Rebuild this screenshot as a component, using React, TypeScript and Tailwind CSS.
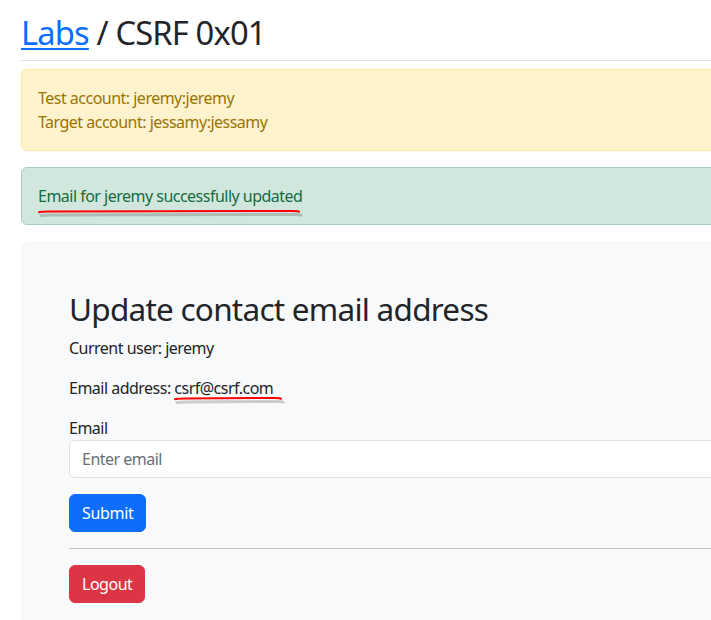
export default function App() {
  return (
    <div className="h-[620px] w-full overflow-hidden bg-white font-['Noto_Sans',sans-serif] tracking-[-0.032em] text-[#212529]">
      <div className="ml-[21px] w-[1100px] pt-[13px]">
        <h1 className="mb-2 text-[32.7px] leading-[1.2] font-normal tracking-[-0.026em]">
          <a href="#" className="text-[#0d6efd] underline underline-offset-[3px] decoration-[1.5px]">
            Labs
          </a>{" "}
          / CSRF 0x01
        </h1>
        <hr className="mb-2 border-0 border-t border-[#dee2e6]" />

        <div className="mb-4 rounded-[6px] border border-[#ffe69c] bg-[#fff3cd] p-4 text-base leading-6 text-[#997404]">
          <div>Test account: jeremy:jeremy</div>
          <div>Target account: jessamy:jessamy</div>
        </div>

        <div className="mb-4 rounded-[6px] border border-[#a3cfbb] bg-[#d1e7dd] p-4 text-base leading-6 text-[#146c43]">
          <span className="relative inline-block">
            Email for jeremy successfully updated
            <Mark width={264} className="absolute left-[-1px] top-[25px]" />
          </span>
        </div>

        <div className="rounded-[6px] bg-[#f8f9fa] px-12 pt-[49px] pb-12">
          <h1 className="mb-2 text-[31.5px] leading-[1.2] font-normal tracking-[-0.024em]">
            Update contact email address
          </h1>
          <p className="mb-4 text-base leading-6">Current user: jeremy</p>
          <p className="mb-4 text-base leading-6">
            Email address:{" "}
            <span className="relative inline-block">
              csrf@csrf.com
              <Mark width={110} className="absolute left-[-1px] top-[20px]" />
            </span>
          </p>
          <form className="w-[1004px]" onSubmit={(e) => e.preventDefault()}>
            <label className="block text-base leading-6">Email</label>
            <input
              type="email"
              placeholder="Enter email"
              className="mb-4 block h-[38px] w-full rounded-[6px] border border-[#dee2e6] bg-white px-3 text-base tracking-[-0.032em] text-[#212529] outline-none placeholder:text-[#6c6e71]"
            />
            <button
              type="submit"
              className="rounded-[6px] border border-[#0d6efd] bg-[#0d6efd] px-3 py-[6px] text-base leading-6 tracking-[-0.02em] text-white"
            >
              Submit
            </button>
          </form>
          <hr className="my-4 w-[1004px] border-0 border-t border-[#c2c4c6]" />
          <button
            type="button"
            className="rounded-[6px] border border-[#dc3545] bg-[#dc3545] px-3 py-[6px] text-base leading-6 tracking-[-0.03em] text-white"
          >
            Logout
          </button>
        </div>
      </div>
    </div>
  );
}

function Mark({ width, className }: { width: number; className?: string }) {
  const end = width - 2;
  return (
    <svg width={width + 4} height={8} className={className} viewBox={`0 0 ${width + 4} 8`}>
      <path
        d={`M2 4.5 Q 4 4.2 12 4 L ${end - 6} 3.4 Q ${end - 1} 3.4 ${end} 4.2`}
        stroke="rgba(0,0,0,0.18)"
        strokeWidth={3}
        fill="none"
        transform="translate(2 2)"
        strokeLinecap="round"
      />
      <path
        d={`M2 3.2 Q 4 2.6 12 2.5 L ${end - 6} 1.9 Q ${end - 1} 1.9 ${end} 2.6`}
        stroke="#f00"
        strokeWidth={2}
        fill="none"
        strokeLinecap="round"
      />
    </svg>
  );
}
